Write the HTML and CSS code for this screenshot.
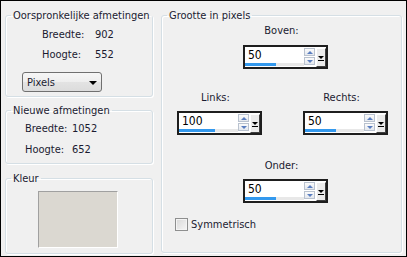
FILE: index.html
```html
<!DOCTYPE html>
<html lang="nl">
<head>
    <meta charset="UTF-8">
    <title>Randen toevoegen</title>
    <link rel="stylesheet" href="styles.css">
</head>
<body>
    <div class="dialog">
        <div class="col-left">
            <fieldset class="group group-orig">
                <legend>Oorspronkelijke afmetingen</legend>
                <div class="dims dims-orig">
                    <span>Breedte:</span><span>902</span>
                    <span>Hoogte:</span><span>552</span>
                </div>
                <div class="select">Pixels<span class="select-arrow"></span></div>
            </fieldset>
            <fieldset class="group group-new">
                <legend>Nieuwe afmetingen</legend>
                <div class="dims dims-new">
                    <span>Breedte:</span><span>1052</span>
                    <span>Hoogte:</span><span>652</span>
                </div>
            </fieldset>
            <fieldset class="group group-color">
                <legend>Kleur</legend>
                <div class="swatch"></div>
            </fieldset>
        </div>

        <fieldset class="group group-size">
            <legend>Grootte in pixels</legend>

            <div class="row row-top">
                <div class="field field-mid">
                    <label>Boven:</label>
                    <div class="spin">
                        <div class="spin-text">
                            <span class="spin-value">50</span>
                            <div class="spin-bar"><div class="spin-fill" style="width: 31px"></div></div>
                        </div>
                        <div class="spin-btns"><span class="spin-up"></span><span class="spin-down"></span></div>
                        <div class="spin-drop"><span></span></div>
                    </div>
                </div>
            </div>

            <div class="row row-sides">
                <div class="field field-left">
                    <label>Links:</label>
                    <div class="spin">
                        <div class="spin-text">
                            <span class="spin-value">100</span>
                            <div class="spin-bar"><div class="spin-fill" style="width: 36px"></div></div>
                        </div>
                        <div class="spin-btns"><span class="spin-up"></span><span class="spin-down"></span></div>
                        <div class="spin-drop"><span></span></div>
                    </div>
                </div>
                <div class="field field-right">
                    <label>Rechts:</label>
                    <div class="spin">
                        <div class="spin-text">
                            <span class="spin-value">50</span>
                            <div class="spin-bar"><div class="spin-fill" style="width: 31px"></div></div>
                        </div>
                        <div class="spin-btns"><span class="spin-up"></span><span class="spin-down"></span></div>
                        <div class="spin-drop"><span></span></div>
                    </div>
                </div>
            </div>

            <div class="row row-bottom">
                <div class="field field-mid">
                    <label>Onder:</label>
                    <div class="spin">
                        <div class="spin-text">
                            <span class="spin-value">50</span>
                            <div class="spin-bar"><div class="spin-fill" style="width: 31px"></div></div>
                        </div>
                        <div class="spin-btns"><span class="spin-up"></span><span class="spin-down"></span></div>
                        <div class="spin-drop"><span></span></div>
                    </div>
                </div>
            </div>

            <div class="check-row">
                <span class="checkbox"></span>
                <span>Symmetrisch</span>
            </div>
        </fieldset>
    </div>
</body>
</html>
```

FILE: styles.css
```css
body {
    margin: 0;
    font-family: "DejaVu Sans Condensed", "Liberation Sans", sans-serif;
    font-size: 11px;
    line-height: 13px;
    color: #1b1b30;
}
.dialog {
    box-sizing: border-box;
    width: 407px;
    height: 257px;
    border: 1px solid #000;
    background: #f0f0f0;
    padding: 8px 4px 2px 4px;
    display: flex;
    gap: 8px;
}
.col-left {
    width: 148px;
    display: flex;
    flex-direction: column;
}
.group {
    margin: 0;
    padding: 0;
    min-width: 0;
    border: 1px solid #d5dfe5;
    border-radius: 3px;
    box-shadow: inset 1px 1px #fff, 1px 1px #fff;
}
.group legend {
    margin-left: 5px;
    padding: 0 2px;
    line-height: 13px;
}
.group-orig {
    padding: 2px 0 4px 0;
}
.group-new {
    margin-top: 7px;
    padding: 1px 0 3px 0;
}
.group-color {
    margin-top: 8px;
    flex: 1;
}
.group-size {
    width: 241px;
    box-sizing: border-box;
    margin-bottom: 1px;
}

/* afmetingen */
.dims {
    display: grid;
}
.dims-orig {
    padding-left: 36px;
    grid-template-columns: 53px auto;
    grid-auto-rows: 20px;
    align-items: center;
}
.dims-new {
    padding-left: 19px;
    grid-template-columns: 47px auto;
    grid-auto-rows: 21px;
    align-items: center;
}
.select {
    box-sizing: border-box;
    width: 80px;
    height: 20px;
    margin: 8px 0 0 16px;
    padding-left: 4px;
    border: 1px solid #707070;
    border-radius: 3px;
    background: linear-gradient(#f6f6f6, #eeeeee 50%, #e3e3e3 50%, #dcdcdc);
    display: flex;
    align-items: center;
    justify-content: space-between;
    padding-right: 4px;
}
.select-arrow {
    width: 0;
    height: 0;
    border-left: 4px solid transparent;
    border-right: 4px solid transparent;
    border-top: 4px solid #000;
    margin-top: 1px;
}
.swatch {
    box-sizing: border-box;
    width: 80px;
    height: 57px;
    margin: 6px 0 0 32px;
    background: #dbd8d1;
    border-top: 1px solid #a0a0a0;
    border-left: 1px solid #a0a0a0;
    border-right: 1px solid #fff;
    border-bottom: 1px solid #fff;
}

/* randen */
.row {
    display: flex;
}
.row-top {
    margin-top: 2px;
    padding-left: 81px;
}
.row-sides {
    margin-top: 22px;
    padding-left: 15px;
    gap: 41px;
}
.row-bottom {
    margin-top: 24px;
    padding-left: 81px;
}
.field {
    width: 85px;
    display: flex;
    flex-direction: column;
}
.field label {
    text-align: center;
    padding-right: 8px;
    height: 13px;
    margin-bottom: 8px;
}
.row-sides .field label,
.row-bottom .field label {
    margin-bottom: 7px;
}
.spin {
    box-sizing: border-box;
    width: 85px;
    height: 24px;
    border: 2px solid #1e1e1e;
    background: #fff;
    display: flex;
}
.spin-text {
    flex: 1;
    display: flex;
    flex-direction: column;
}
.spin-value {
    padding: 2px 0 0 3px;
    font-size: 12px;
    line-height: 13px;
    color: #000;
}
.spin-bar {
    margin-top: auto;
    margin-bottom: 1px;
    height: 3px;
    background: #e8e8e8;
}
.spin-fill {
    height: 3px;
    background: #3399ee;
}
.spin-btns {
    width: 11px;
    margin: 1px 1px 0 0;
    display: flex;
    flex-direction: column;
    gap: 1px;
}
.spin-btns span {
    box-sizing: border-box;
    height: 8px;
    border: 1px solid #b9c2cf;
    background: linear-gradient(#fbfbfb, #e4e8ee);
    display: flex;
    align-items: center;
    justify-content: center;
}
.spin-up::before,
.spin-down::before {
    content: "";
    width: 0;
    height: 0;
    border-left: 3px solid transparent;
    border-right: 3px solid transparent;
}
.spin-up::before {
    border-bottom: 3px solid #5a7ec0;
}
.spin-down::before {
    border-top: 3px solid #5a7ec0;
}
.spin-drop {
    box-sizing: border-box;
    width: 10px;
    margin-top: 1px;
    background: #ececec;
    border-left: 1px solid #fff;
    border-top: 1px solid #fff;
    border-right: 1px solid #404040;
    border-bottom: 1px solid #404040;
    display: flex;
    align-items: center;
    justify-content: center;
}
.spin-drop span {
    width: 0;
    height: 0;
    border-left: 3px solid transparent;
    border-right: 3px solid transparent;
    border-top: 3px solid #000;
    position: relative;
}
.spin-drop span::after {
    content: "";
    position: absolute;
    left: -3px;
    top: 1px;
    width: 6px;
    height: 1px;
    background: #000;
}
.check-row {
    margin: 15px 0 0 13px;
    display: flex;
    align-items: center;
    gap: 3px;
}
.checkbox {
    box-sizing: border-box;
    width: 13px;
    height: 13px;
    border: 1px solid #8e8f8f;
    background: linear-gradient(135deg, #d8d8d8, #f6f6f6);
    box-shadow: inset 0 0 0 1px #f4f4f4;
}
```
